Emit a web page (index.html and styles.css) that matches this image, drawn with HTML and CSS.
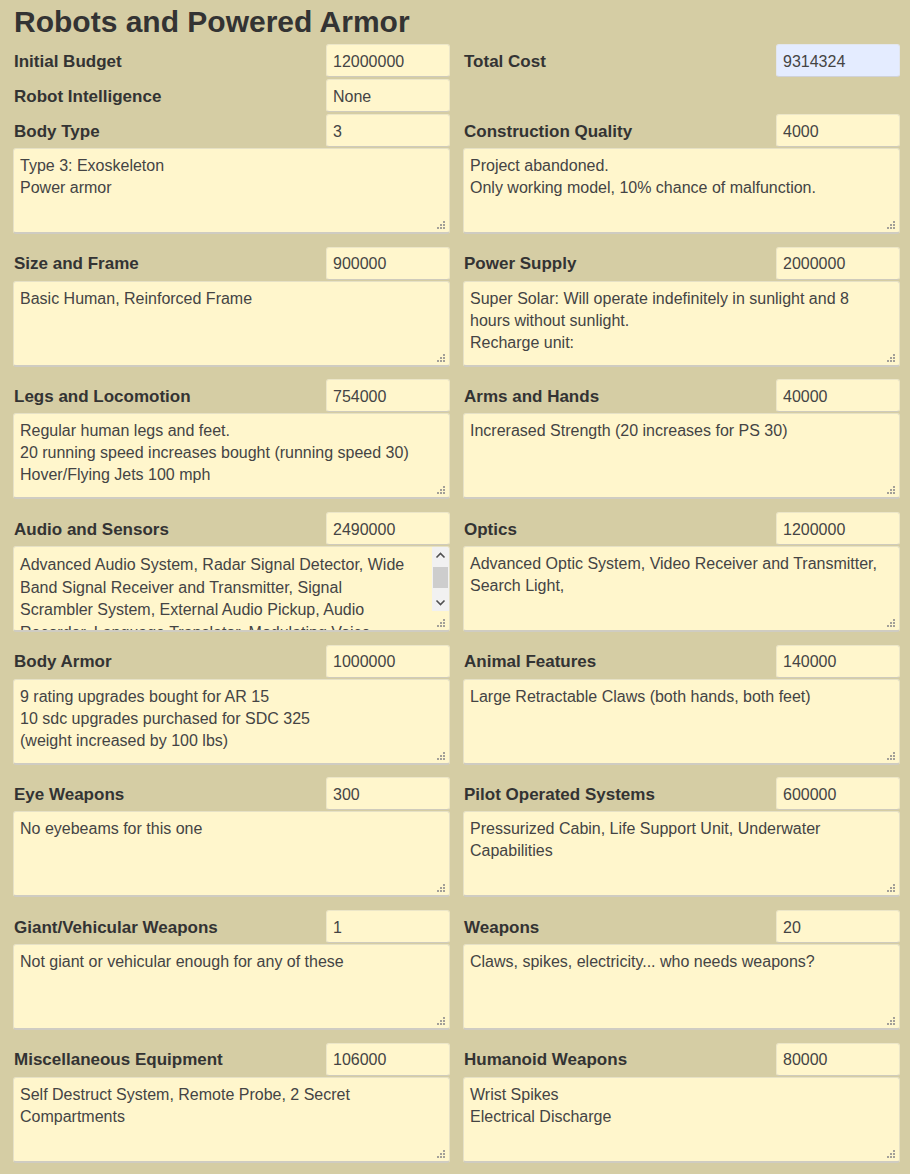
FILE: index.html
```html
<!DOCTYPE html>
<html>
<head>
<meta charset="utf-8">
<link rel="stylesheet" href="styles.css">
</head>
<body>
<div class="page">
  <h1 class="title">Robots and Powered Armor</h1>
  <div class="grid">
    <div class="field simple">
      <div class="row"><span class="label">Initial Budget</span><span class="input">12000000</span></div>
    </div>
    <div class="field simple">
      <div class="row"><span class="label">Total Cost</span><span class="input total">9314324</span></div>
    </div>
    <div class="field simple">
      <div class="row"><span class="label">Robot Intelligence</span><span class="input">None</span></div>
    </div>
    <div class="field simple"></div>

    <div class="field">
      <div class="row"><span class="label">Body Type</span><span class="input">3</span></div>
      <div class="area"><div class="text">Type 3: Exoskeleton<br>Power armor</div><svg class="grip" width="9" height="9" viewBox="0 0 9 9"><rect x="6" y="0" width="2" height="2"/><rect x="3" y="3" width="2" height="2"/><rect x="6" y="3" width="2" height="2"/><rect x="0" y="6" width="2" height="2"/><rect x="3" y="6" width="2" height="2"/><rect x="6" y="6" width="2" height="2"/></svg></div>
    </div>
    <div class="field">
      <div class="row"><span class="label">Construction Quality</span><span class="input">4000</span></div>
      <div class="area"><div class="text">Project abandoned.<br>Only working model, 10% chance of malfunction.</div><svg class="grip" width="9" height="9" viewBox="0 0 9 9"><rect x="6" y="0" width="2" height="2"/><rect x="3" y="3" width="2" height="2"/><rect x="6" y="3" width="2" height="2"/><rect x="0" y="6" width="2" height="2"/><rect x="3" y="6" width="2" height="2"/><rect x="6" y="6" width="2" height="2"/></svg></div>
    </div>

    <div class="field">
      <div class="row"><span class="label">Size and Frame</span><span class="input">900000</span></div>
      <div class="area"><div class="text">Basic Human, Reinforced Frame</div><svg class="grip" width="9" height="9" viewBox="0 0 9 9"><rect x="6" y="0" width="2" height="2"/><rect x="3" y="3" width="2" height="2"/><rect x="6" y="3" width="2" height="2"/><rect x="0" y="6" width="2" height="2"/><rect x="3" y="6" width="2" height="2"/><rect x="6" y="6" width="2" height="2"/></svg></div>
    </div>
    <div class="field">
      <div class="row"><span class="label">Power Supply</span><span class="input">2000000</span></div>
      <div class="area"><div class="text">Super Solar: Will operate indefinitely in sunlight and 8 hours without sunlight.<br>Recharge unit:</div><svg class="grip" width="9" height="9" viewBox="0 0 9 9"><rect x="6" y="0" width="2" height="2"/><rect x="3" y="3" width="2" height="2"/><rect x="6" y="3" width="2" height="2"/><rect x="0" y="6" width="2" height="2"/><rect x="3" y="6" width="2" height="2"/><rect x="6" y="6" width="2" height="2"/></svg></div>
    </div>

    <div class="field">
      <div class="row"><span class="label">Legs and Locomotion</span><span class="input">754000</span></div>
      <div class="area"><div class="text">Regular human legs and feet.<br>20 running speed increases bought (running speed 30)<br>Hover/Flying Jets 100 mph</div><svg class="grip" width="9" height="9" viewBox="0 0 9 9"><rect x="6" y="0" width="2" height="2"/><rect x="3" y="3" width="2" height="2"/><rect x="6" y="3" width="2" height="2"/><rect x="0" y="6" width="2" height="2"/><rect x="3" y="6" width="2" height="2"/><rect x="6" y="6" width="2" height="2"/></svg></div>
    </div>
    <div class="field">
      <div class="row"><span class="label">Arms and Hands</span><span class="input">40000</span></div>
      <div class="area"><div class="text">Increrased Strength (20 increases for PS 30)</div><svg class="grip" width="9" height="9" viewBox="0 0 9 9"><rect x="6" y="0" width="2" height="2"/><rect x="3" y="3" width="2" height="2"/><rect x="6" y="3" width="2" height="2"/><rect x="0" y="6" width="2" height="2"/><rect x="3" y="6" width="2" height="2"/><rect x="6" y="6" width="2" height="2"/></svg></div>
    </div>

    <div class="field">
      <div class="row"><span class="label">Audio and Sensors</span><span class="input">2490000</span></div>
      <div class="area scrolled"><div class="text">Advanced Audio System, Radar Signal Detector, Wide Band Signal Receiver and Transmitter, Signal Scrambler System, External Audio Pickup, Audio Recorder, Language Translator, Modulating Voice Synthesizer</div>
        <div class="scrollbar">
          <svg class="arrow" width="17" height="17" viewBox="0 0 17 17"><path d="M4.5 10.5 L8.5 6.5 L12.5 10.5" fill="none" stroke="#505050" stroke-width="1.6"/></svg>
          <div class="track"><div class="thumb"></div></div>
          <svg class="arrow" width="17" height="17" viewBox="0 0 17 17"><path d="M4.5 6.5 L8.5 10.5 L12.5 6.5" fill="none" stroke="#505050" stroke-width="1.6"/></svg>
        </div>
        <svg class="grip" width="9" height="9" viewBox="0 0 9 9"><rect x="6" y="0" width="2" height="2"/><rect x="3" y="3" width="2" height="2"/><rect x="6" y="3" width="2" height="2"/><rect x="0" y="6" width="2" height="2"/><rect x="3" y="6" width="2" height="2"/><rect x="6" y="6" width="2" height="2"/></svg></div>
    </div>
    <div class="field">
      <div class="row"><span class="label">Optics</span><span class="input">1200000</span></div>
      <div class="area"><div class="text">Advanced Optic System, Video Receiver and Transmitter, Search Light,</div><svg class="grip" width="9" height="9" viewBox="0 0 9 9"><rect x="6" y="0" width="2" height="2"/><rect x="3" y="3" width="2" height="2"/><rect x="6" y="3" width="2" height="2"/><rect x="0" y="6" width="2" height="2"/><rect x="3" y="6" width="2" height="2"/><rect x="6" y="6" width="2" height="2"/></svg></div>
    </div>

    <div class="field">
      <div class="row"><span class="label">Body Armor</span><span class="input">1000000</span></div>
      <div class="area"><div class="text">9 rating upgrades bought for AR 15<br>10 sdc upgrades purchased for SDC 325<br>(weight increased by 100 lbs)</div><svg class="grip" width="9" height="9" viewBox="0 0 9 9"><rect x="6" y="0" width="2" height="2"/><rect x="3" y="3" width="2" height="2"/><rect x="6" y="3" width="2" height="2"/><rect x="0" y="6" width="2" height="2"/><rect x="3" y="6" width="2" height="2"/><rect x="6" y="6" width="2" height="2"/></svg></div>
    </div>
    <div class="field">
      <div class="row"><span class="label">Animal Features</span><span class="input">140000</span></div>
      <div class="area"><div class="text">Large Retractable Claws (both hands, both feet)</div><svg class="grip" width="9" height="9" viewBox="0 0 9 9"><rect x="6" y="0" width="2" height="2"/><rect x="3" y="3" width="2" height="2"/><rect x="6" y="3" width="2" height="2"/><rect x="0" y="6" width="2" height="2"/><rect x="3" y="6" width="2" height="2"/><rect x="6" y="6" width="2" height="2"/></svg></div>
    </div>

    <div class="field">
      <div class="row"><span class="label">Eye Weapons</span><span class="input">300</span></div>
      <div class="area"><div class="text">No eyebeams for this one</div><svg class="grip" width="9" height="9" viewBox="0 0 9 9"><rect x="6" y="0" width="2" height="2"/><rect x="3" y="3" width="2" height="2"/><rect x="6" y="3" width="2" height="2"/><rect x="0" y="6" width="2" height="2"/><rect x="3" y="6" width="2" height="2"/><rect x="6" y="6" width="2" height="2"/></svg></div>
    </div>
    <div class="field">
      <div class="row"><span class="label">Pilot Operated Systems</span><span class="input">600000</span></div>
      <div class="area"><div class="text">Pressurized Cabin, Life Support Unit, Underwater Capabilities</div><svg class="grip" width="9" height="9" viewBox="0 0 9 9"><rect x="6" y="0" width="2" height="2"/><rect x="3" y="3" width="2" height="2"/><rect x="6" y="3" width="2" height="2"/><rect x="0" y="6" width="2" height="2"/><rect x="3" y="6" width="2" height="2"/><rect x="6" y="6" width="2" height="2"/></svg></div>
    </div>

    <div class="field">
      <div class="row"><span class="label">Giant/Vehicular Weapons</span><span class="input">1</span></div>
      <div class="area"><div class="text">Not giant or vehicular enough for any of these</div><svg class="grip" width="9" height="9" viewBox="0 0 9 9"><rect x="6" y="0" width="2" height="2"/><rect x="3" y="3" width="2" height="2"/><rect x="6" y="3" width="2" height="2"/><rect x="0" y="6" width="2" height="2"/><rect x="3" y="6" width="2" height="2"/><rect x="6" y="6" width="2" height="2"/></svg></div>
    </div>
    <div class="field">
      <div class="row"><span class="label">Weapons</span><span class="input">20</span></div>
      <div class="area"><div class="text">Claws, spikes, electricity... who needs weapons?</div><svg class="grip" width="9" height="9" viewBox="0 0 9 9"><rect x="6" y="0" width="2" height="2"/><rect x="3" y="3" width="2" height="2"/><rect x="6" y="3" width="2" height="2"/><rect x="0" y="6" width="2" height="2"/><rect x="3" y="6" width="2" height="2"/><rect x="6" y="6" width="2" height="2"/></svg></div>
    </div>

    <div class="field">
      <div class="row"><span class="label">Miscellaneous Equipment</span><span class="input">106000</span></div>
      <div class="area"><div class="text">Self Destruct System, Remote Probe, 2 Secret Compartments</div><svg class="grip" width="9" height="9" viewBox="0 0 9 9"><rect x="6" y="0" width="2" height="2"/><rect x="3" y="3" width="2" height="2"/><rect x="6" y="3" width="2" height="2"/><rect x="0" y="6" width="2" height="2"/><rect x="3" y="6" width="2" height="2"/><rect x="6" y="6" width="2" height="2"/></svg></div>
    </div>
    <div class="field">
      <div class="row"><span class="label">Humanoid Weapons</span><span class="input">80000</span></div>
      <div class="area"><div class="text">Wrist Spikes<br>Electrical Discharge</div><svg class="grip" width="9" height="9" viewBox="0 0 9 9"><rect x="6" y="0" width="2" height="2"/><rect x="3" y="3" width="2" height="2"/><rect x="6" y="3" width="2" height="2"/><rect x="0" y="6" width="2" height="2"/><rect x="3" y="6" width="2" height="2"/><rect x="6" y="6" width="2" height="2"/></svg></div>
    </div>
  </div>
</div>
</body>
</html>
```

FILE: styles.css
```css
html, body {
  margin: 0;
  padding: 0;
  background: #d5cda4;
}
body {
  font-family: "Liberation Sans", Arial, sans-serif;
  color: #333;
  width: 910px;
  height: 1174px;
  overflow: hidden;
}
.page {
  padding: 0 10px 0 13px;
}
.title {
  margin: 4px 0 0 1px;
  font-size: 30px;
  font-weight: bold;
  line-height: 35px;
  color: #333;
}
.grid {
  margin-top: 5px;
  display: grid;
  grid-template-columns: 437px 437px;
  column-gap: 13px;
  align-items: start;
}
.field {
  display: flex;
  flex-direction: column;
  gap: 1px;
  margin-bottom: 12.7px;
}
.field.simple {
  margin-bottom: 2px;
  min-height: 33px;
}
.row {
  display: flex;
  align-items: center;
  justify-content: space-between;
  height: 33px;
}
.label {
  font-size: 17px;
  font-weight: bold;
  color: #333;
  padding: 2px 0 0 1px;
}
.input {
  box-sizing: border-box;
  width: 124px;
  height: 33px;
  padding: 2px 6px 0;
  display: flex;
  align-items: center;
  font-size: 16px;
  color: #444;
  background: #fff6cc;
  border: 1px solid #ece6c8;
  border-bottom-color: #cfcbbc;
  border-radius: 3px;
}
.input.total {
  background: #e4ecff;
  border-color: #e2e6ee;
  border-bottom-color: #cfd2da;
}
.area {
  position: relative;
  box-sizing: border-box;
  height: 86px;
  background: #fff6cc;
  border: 1px solid #e6e1c6;
  border-bottom: 2px solid #cfccc2;
  border-radius: 3px;
  overflow: hidden;
}
.text {
  padding: 6px 6px 5px;
  font-size: 16px;
  line-height: 22px;
  color: #444;
}
.scrolled .text {
  padding-top: 7px;
  line-height: 22.5px;
  padding-right: 40px;
}
.grip {
  position: absolute;
  right: 3px;
  bottom: 2px;
  fill: #a3a098;
  shape-rendering: crispEdges;
}
.scrollbar {
  position: absolute;
  top: 0;
  right: 0;
  width: 17px;
  height: 64px;
  background: #f1f1f1;
  display: flex;
  flex-direction: column;
}
.arrow {
  display: block;
  flex: none;
}
.track {
  flex: 1;
  position: relative;
}
.thumb {
  position: absolute;
  left: 1px;
  right: 1px;
  top: 3px;
  height: 21px;
  background: #cdcdcd;
}
```
